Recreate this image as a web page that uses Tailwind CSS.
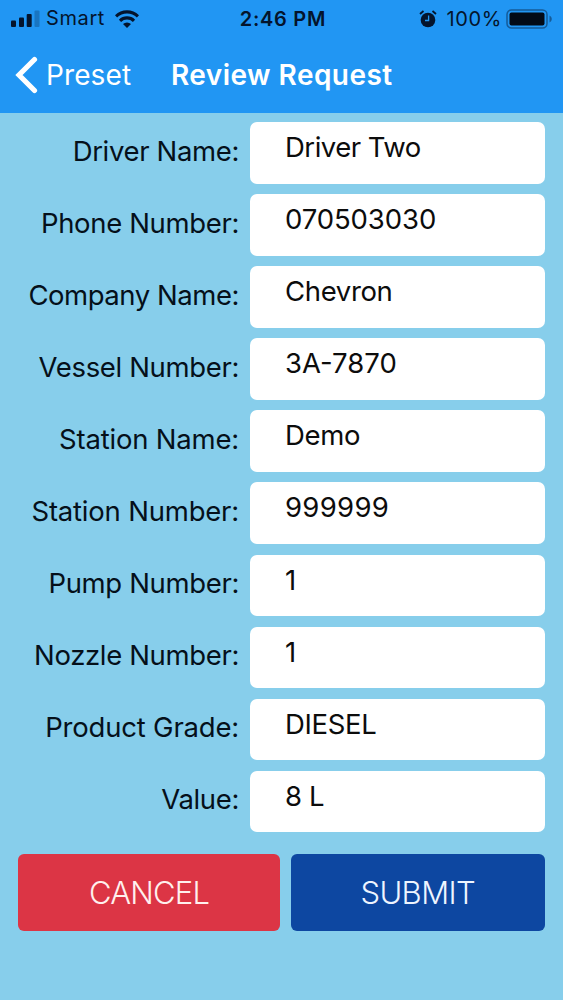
<!DOCTYPE html>
<html lang="en">
<head>
  <meta charset="UTF-8" />
  <meta name="viewport" content="width=device-width, initial-scale=1.0"/>
  <title>Review Request</title>
  <script src="https://cdn.jsdelivr.net/npm/@tailwindcss/browser@4"></script>
</head>
<body class="bg-[#87ceeb] font-['Inter',sans-serif] min-h-screen text-[#05101a]">

  <header class="bg-[#2196f3] h-[113px]">
    <!-- Status bar -->
    <div class="grid grid-cols-3 items-center h-[37px] pl-[11px] pr-[10px] text-[#04142c]">
      <div class="flex items-center">
        <svg class="w-[29px] h-[17px]" viewBox="0 0 29 17" fill="currentColor">
          <rect x="0" y="10.5" width="5" height="6.5" rx="1"/>
          <rect x="8" y="7.5" width="5" height="9.5" rx="1"/>
          <rect x="15.7" y="4" width="5" height="13" rx="1"/>
          <rect x="23.5" y="0.5" width="5" height="16.5" rx="1" opacity=".25"/>
        </svg>
        <span class="ml-[6px] text-[20px] leading-[37px] tracking-[0.6px]">Smart</span>
        <svg class="ml-[10px] w-[24px] h-[18px]" viewBox="0 0 24 18" fill="none" stroke="currentColor" stroke-width="3.2">
          <path d="M1 6.4a15.8 15.8 0 0 1 22 0"/>
          <path d="M5 10.8a10 10 0 0 1 14 0"/>
          <path d="M12 18l-4-4a5.8 5.8 0 0 1 8 0z" fill="currentColor" stroke="none"/>
        </svg>
      </div>
      <p class="pl-[2px] text-center text-[20px] font-semibold tracking-[0.7px]">2:46 PM</p>
      <div class="flex items-center justify-end">
        <svg class="w-[18px] h-[18px]" viewBox="0 0 18 18" fill="none" stroke="currentColor">
          <circle cx="9" cy="10" r="7.3" fill="currentColor" stroke="none"/>
          <path d="M1 4l3.5-3M17 4l-3.5-3" stroke-width="1.8"/>
          <path d="M9.6 5.5v5H6" stroke="#2196f3" stroke-width="1.3"/>
        </svg>
        <span class="ml-[10px] text-[20px] tracking-[0.6px]">100%</span>
        <svg class="ml-[4px] w-[47px] h-[20px]" viewBox="0 0 47 20">
          <rect x="1" y="1" width="40" height="18" rx="4.5" fill="none" stroke="#155b98" stroke-width="1.5"/>
          <rect x="3.5" y="3.5" width="35" height="13" rx="2" fill="#020a16"/>
          <path d="M43.5 6.5c3 1.5 3 5.5 0 7z" fill="#155b98"/>
        </svg>
      </div>
    </div>

    <!-- Nav bar -->
    <div class="flex items-center h-[75px] pl-[15px] text-white">
      <svg class="w-[23px] h-[38px]" viewBox="0 0 23 38" fill="none" stroke="currentColor" stroke-width="5.2" stroke-linecap="round" stroke-linejoin="miter">
        <path d="M19.5 3.5L4 19l15.5 15.5"/>
      </svg>
      <a class="ml-[8px] w-[125px] text-[28px] tracking-[0.1px]">Preset</a>
      <h1 class="text-[28px] font-semibold tracking-[0.45px]">Review Request</h1>
    </div>
  </header>

  <main class="pt-[9px] px-[18px]">
    <div class="flex flex-col gap-[10.6px] text-[27.5px] leading-[33px] tracking-[-0.35px]">
      <div class="flex h-[61.5px]">
        <p class="w-[221px] mr-[11px] pt-[12.5px] text-right whitespace-nowrap">Driver Name:</p>
        <p class="flex-1 bg-white rounded-[7px] pl-[35px] pt-[9px] text-[#0c0c0c] tracking-[-0.5px]">Driver Two</p>
      </div>
      <div class="flex h-[61.5px]">
        <p class="w-[221px] mr-[11px] pt-[12.5px] text-right whitespace-nowrap">Phone Number:</p>
        <p class="flex-1 bg-white rounded-[7px] pl-[35px] pt-[9px] text-[#0c0c0c] tracking-[-0.1px]">070503030</p>
      </div>
      <div class="flex h-[61.5px]">
        <p class="w-[221px] mr-[11px] pt-[12.5px] text-right whitespace-nowrap tracking-[-0.45px]">Company Name:</p>
        <p class="flex-1 bg-white rounded-[7px] pl-[35px] pt-[9px] text-[#0c0c0c]">Chevron</p>
      </div>
      <div class="flex h-[61.5px]">
        <p class="w-[221px] mr-[11px] pt-[12.5px] text-right whitespace-nowrap">Vessel Number:</p>
        <p class="flex-1 bg-white rounded-[7px] pl-[35px] pt-[9px] text-[#0c0c0c] tracking-[0px]">3A-7870</p>
      </div>
      <div class="flex h-[61.5px]">
        <p class="w-[221px] mr-[11px] pt-[12.5px] text-right whitespace-nowrap tracking-[-0.2px]">Station Name:</p>
        <p class="flex-1 bg-white rounded-[7px] pl-[35px] pt-[9px] text-[#0c0c0c]">Demo</p>
      </div>
      <div class="flex h-[61.5px]">
        <p class="w-[221px] mr-[11px] pt-[12.5px] text-right whitespace-nowrap tracking-[-0.2px]">Station Number:</p>
        <p class="flex-1 bg-white rounded-[7px] pl-[35px] pt-[9px] text-[#0c0c0c] tracking-[0.3px]">999999</p>
      </div>
      <div class="flex h-[61.5px]">
        <p class="w-[221px] mr-[11px] pt-[12.5px] text-right whitespace-nowrap">Pump Number:</p>
        <p class="flex-1 bg-white rounded-[7px] pl-[35px] pt-[9px] text-[#0c0c0c]">1</p>
      </div>
      <div class="flex h-[61.5px]">
        <p class="w-[221px] mr-[11px] pt-[12.5px] text-right whitespace-nowrap">Nozzle Number:</p>
        <p class="flex-1 bg-white rounded-[7px] pl-[35px] pt-[9px] text-[#0c0c0c]">1</p>
      </div>
      <div class="flex h-[61.5px]">
        <p class="w-[221px] mr-[11px] pt-[12.5px] text-right whitespace-nowrap tracking-[-0.2px]">Product Grade:</p>
        <p class="flex-1 bg-white rounded-[7px] pl-[35px] pt-[9px] text-[#0c0c0c]">DIESEL</p>
      </div>
      <div class="flex h-[61.5px]">
        <p class="w-[221px] mr-[11px] pt-[12.5px] text-right whitespace-nowrap">Value:</p>
        <p class="flex-1 bg-white rounded-[7px] pl-[35px] pt-[9px] text-[#0c0c0c]">8 L</p>
      </div>
    </div>

    <div class="flex gap-[10.5px] mt-[21.2px] text-[31px] font-light">
      <button class="w-[262px] h-[77.5px] pt-[1px] bg-[#dc3545] text-[#fff0ee] rounded-[6px] tracking-[-0.8px]">CANCEL</button>
      <button class="flex-1 h-[77.5px] pt-[1px] bg-[#0d47a1] text-[#eef5ff] rounded-[6px] tracking-[-0.6px]">SUBMIT</button>
    </div>
  </main>

</body>
</html>
